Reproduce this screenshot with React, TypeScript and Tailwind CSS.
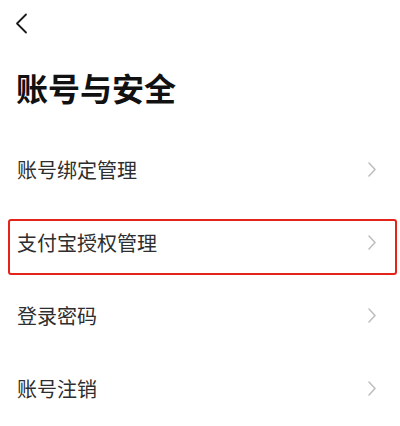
import React from 'react';

const items = ['账号绑定管理', '支付宝授权管理', '登录密码', '账号注销'];

const Chevron: React.FC = () => (
  <svg width="8" height="15" viewBox="0 0 8 15" fill="none">
    <path d="M1 1l6 6.5L1 14" stroke="#bdbdbd" strokeWidth="1.5" strokeLinecap="round" strokeLinejoin="round" />
  </svg>
);

const App: React.FC = () => {
  return (
    <div
      className="w-[400px] h-[426px] bg-white overflow-hidden"
      style={{ fontFamily: '"Noto Sans CJK SC", "Noto Sans", sans-serif' }}
    >
      <div className="h-[48px] pl-[15px] pt-[13px]">
        <svg width="13" height="21" viewBox="0 0 13 21" fill="none">
          <path d="M11 1.5L2 10.5l9 9" stroke="#1a1a1a" strokeWidth="1.8" strokeLinecap="round" strokeLinejoin="round" />
        </svg>
      </div>
      <div className="h-[85px] pl-[16px] pt-[19px]">
        <h1 className="text-[32px] leading-[40px] font-semibold text-[#111]">账号与安全</h1>
      </div>
      <ul>
        {items.map((item, i) => (
          <li key={item} className="relative h-[73px] flex items-center justify-between pl-[17px] pr-[24px]">
            <span className="text-[20px] leading-[28px] text-[#2e2e2e]">{item}</span>
            <Chevron />
            {i === 1 && (
              <div className="absolute left-[8px] right-[3px] top-[13px] h-[56px] border-2 border-[#e3241c] rounded-[3px]" />
            )}
          </li>
        ))}
      </ul>
    </div>
  );
};

export default App;
